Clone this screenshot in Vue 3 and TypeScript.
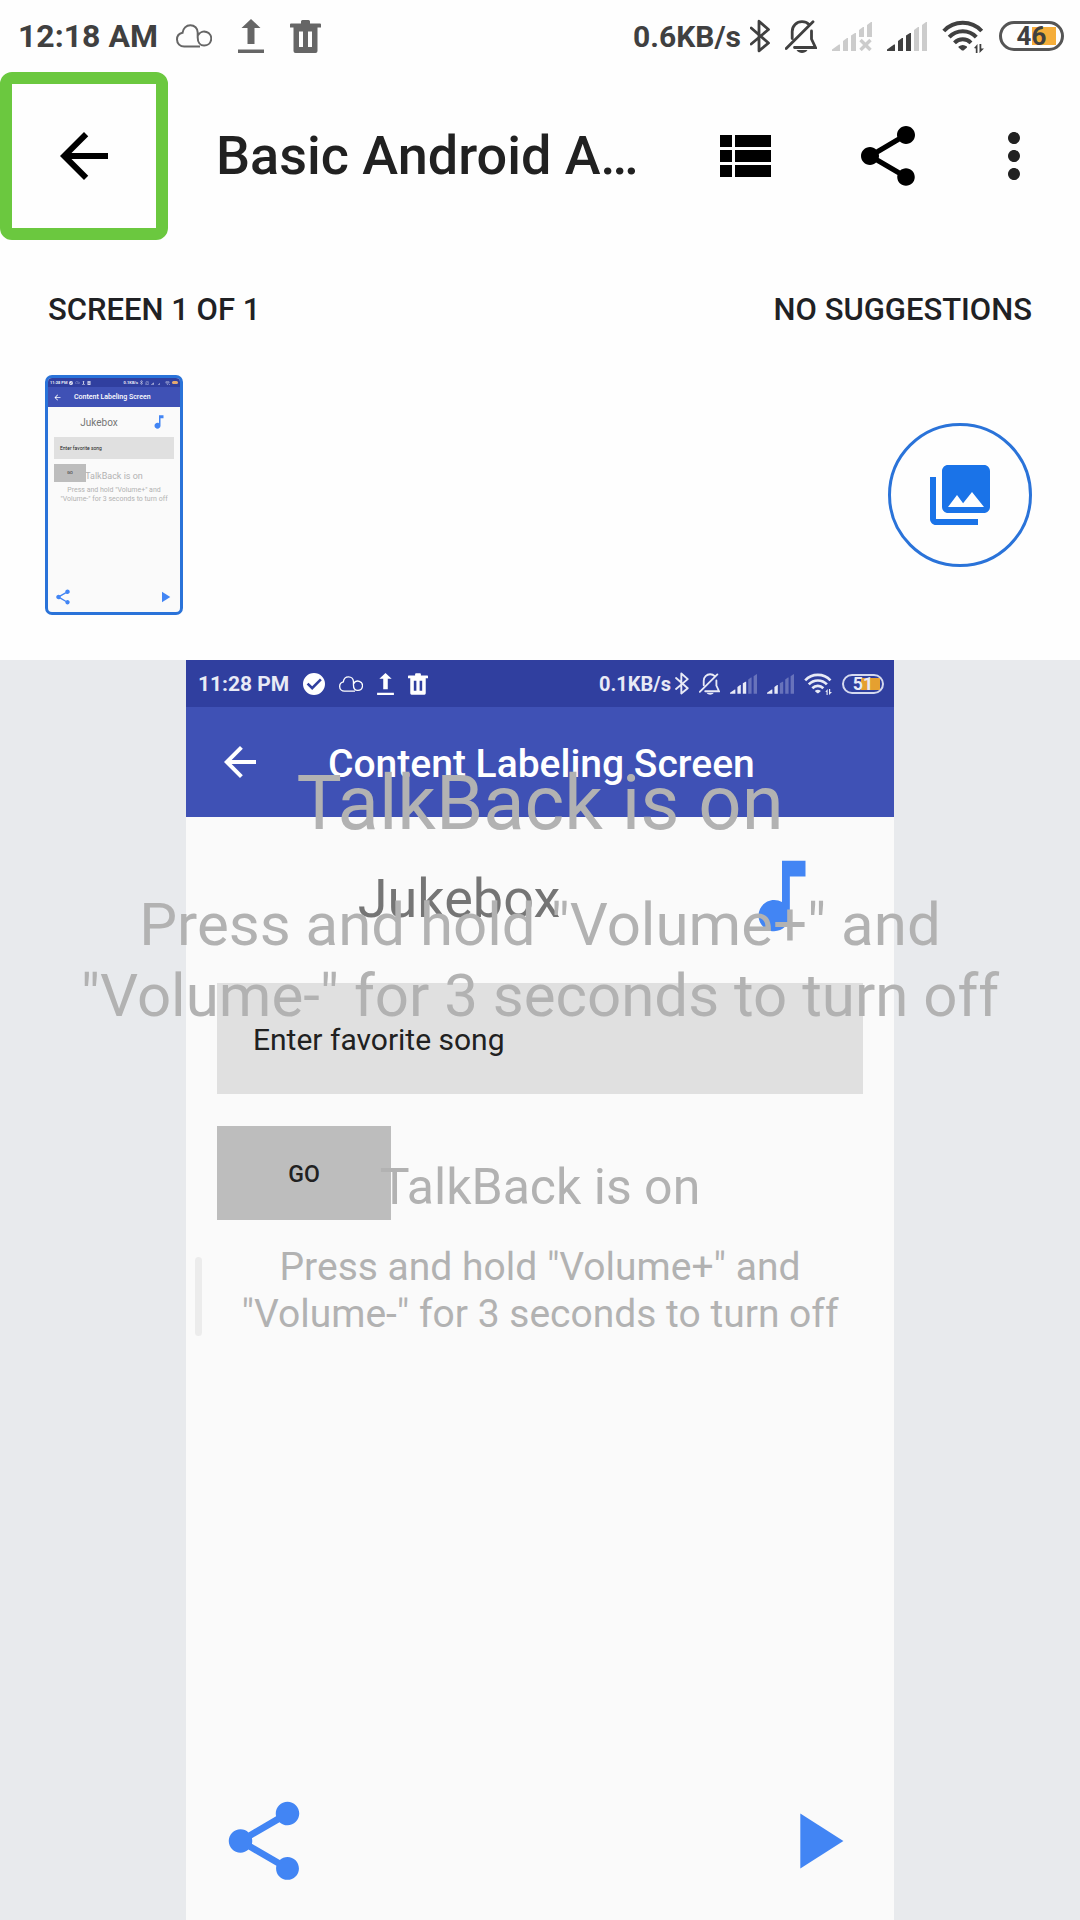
<script setup lang="ts">
import { ref } from 'vue'

interface Glyph {
  id: string
  w: number
  h: number
}

const title = 'Basic Android Apps'
const screenTitle = 'Content Labeling Screen'
const song = ref('')

const outerLeft: Glyph[] = [
  { id: 'cloud', w: 36, h: 24 },
  { id: 'upload', w: 26, h: 34 },
  { id: 'trash', w: 31, h: 33 },
]
</script>

<template>
  <svg class="sprite" aria-hidden="true">
    <symbol id="cloud" viewBox="0 0 36 24">
      <path
        d="M24 22.6H8.2C4.200 22.600 1 19.600 1 15.600 1 12 3.400 9.400 6.500 8.800 7 4.400 10.300 1.200 14.300 1.200 18.500 1.200 21.700 4.300 21.700 8.600V13.500C21.700 18 24 21.600 28 21.600a7 7 0 1 0-6-10.200"
        fill="none" stroke="currentColor" stroke-width="2" />
    </symbol>
    <symbol id="upload" viewBox="0 0 26 34">
      <path d="M13 0 22.500 9H16.500V25H9.500V9H3.500zM0 30.500h26V34H0z" fill="currentColor" />
    </symbol>
    <symbol id="trash" viewBox="0 0 31 33">
      <path fill-rule="evenodd"
        d="M11 1.500Q11 0 12.500 0H18.500Q20 0 20 1.500V3.500H30Q31 3.500 31 4.500V7.500H27.500V31Q27.500 33 25.500 33H5.500Q3.500 33 3.500 31V7.500H0V4.500Q0 3.500 1 3.500H11zM9 11.500v15.500h4V11.500zM18 11.500v15.500h4V11.500z"
        fill="currentColor" />
    </symbol>
    <symbol id="check" viewBox="0 0 24 24">
      <path fill-rule="evenodd" d="M12 0a12 12 0 1 0 0 24 12 12 0 0 0 0-24zM4 12.500 6 10.500 10 14.500 18.500 6 20.500 8 10 18.500z"
        fill="currentColor" />
    </symbol>
    <symbol id="bluetooth" viewBox="0 0 20 34">
      <path d="M1.200 9 18.500 24 9 31.800V2.200L18.500 10.500 1.200 25" fill="none" stroke="currentColor" stroke-width="2.800"
        stroke-linejoin="round" stroke-linecap="round" />
    </symbol>
    <symbol id="bell" viewBox="0 0 32 33">
      <path d="M7.200 18.500V11.500C7.200 6 11.600 1.700 17 1.700c2.800 0 5.200 1 7 2.700M26.500 11v8L30.500 27.500H9.500M28 1.800 1.200 28.500"
        fill="none" stroke="currentColor" stroke-width="2.800" stroke-linecap="round" />
      <path d="M11.500 30H22.500C21 32.300 19 33 17 33S13 32.300 11.500 30z" fill="currentColor" />
    </symbol>
    <symbol id="bar1" viewBox="0 0 40 29">
      <path d="M0 29V27.500L7 22.500H8V29z" fill="currentColor" />
    </symbol>
    <symbol id="bar2" viewBox="0 0 40 29">
      <path d="M11 29V19L15 16H16V29z" fill="currentColor" />
    </symbol>
    <symbol id="bar3" viewBox="0 0 40 29">
      <path d="M19 29V13.500L23 11H24V29z" fill="currentColor" />
    </symbol>
    <symbol id="bar4" viewBox="0 0 40 29">
      <path d="M27 29V8L31 5H32V29z" fill="currentColor" />
    </symbol>
    <symbol id="bar5" viewBox="0 0 40 29">
      <path d="M35 29V3L39 0H40V29z" fill="currentColor" />
    </symbol>
    <symbol id="nosignal" viewBox="0 0 40 29">
      <path
        d="M0 29V27.500L7 22.500H8V29zM11 29V19L15 16H16V29zM19 29V13.500L23 11H24V29zM27 15V8L31 5H32V15zM35 15V3L39 0H40V15z"
        fill="currentColor" />
      <path d="M28.500 18 38.500 28M38.500 18 28.500 28" stroke="currentColor" stroke-width="3.400" />
    </symbol>
    <symbol id="wifi" viewBox="0 0 42 33">
      <path d="M1.800 11A26 26 0 0 1 39.700 11M7.200 17.200A18.500 18.500 0 0 1 34.300 17.200M12.500 22.800A11.500 11.500 0 0 1 29 22.800"
        fill="none" stroke="currentColor" stroke-width="4" />
      <path d="M16.500 26.500Q20.700 23.500 25 26.500V27.500L21.500 30.500H20L16.500 27.500zM32 28 35.500 24V33H33.800V28.500zM37.500 24H39.300V28.500H42L37.500 33z"
        fill="currentColor" />
    </symbol>
    <symbol id="arrow" viewBox="0 0 24 24">
      <path d="M20 11H7.830l5.590-5.590L12 4l-8 8 8 8 1.410-1.410L7.830 13H20v-2z" fill="currentColor" />
    </symbol>
    <symbol id="share" viewBox="0 0 24 24">
      <path
        d="M18 16.080c-.76 0-1.440.3-1.960.77L8.910 12.700c.05-.23.09-.46.09-.7s-.04-.47-.09-.7l7.050-4.110c.54.5 1.250.81 2.040.81 1.660 0 3-1.340 3-3s-1.340-3-3-3-3 1.340-3 3c0 .24.04.47.09.7L8.040 9.810C7.500 9.310 6.790 9 6 9c-1.660 0-3 1.340-3 3s1.340 3 3 3c.79 0 1.500-.31 2.040-.81l7.120 4.160c-.05.21-.08.43-.08.65 0 1.610 1.310 2.920 2.920 2.920s2.920-1.310 2.920-2.920-1.310-2.920-2.920-2.920z"
        fill="currentColor" />
    </symbol>
    <symbol id="list" viewBox="0 0 24 24">
      <path d="M4 14h4v-4H4v4zm0 5h4v-4H4v4zM4 9h4V5H4v4zm5 5h12v-4H9v4zm0 5h12v-4H9v4zM9 5v4h12V5H9z"
        fill="currentColor" />
    </symbol>
    <symbol id="more" viewBox="0 0 24 24">
      <path
        d="M12 8c1.100 0 2-.9 2-2s-.9-2-2-2-2 .9-2 2 .9 2 2 2zm0 2c-1.100 0-2 .9-2 2s.9 2 2 2 2-.9 2-2-.9-2-2-2zm0 6c-1.100 0-2 .9-2 2s.9 2 2 2 2-.9 2-2-.9-2-2-2z"
        fill="currentColor" />
    </symbol>
    <symbol id="gallery" viewBox="0 0 24 24">
      <path
        d="M22 16V4c0-1.100-.9-2-2-2H8c-1.100 0-2 .9-2 2v12c0 1.100.9 2 2 2h12c1.100 0 2-.9 2-2zm-11-4l2.030 2.710L16 11l4 5H8l3-4zM2 6v14c0 1.100.9 2 2 2h14v-2H4V6H2z"
        fill="currentColor" />
    </symbol>
    <symbol id="note" viewBox="0 0 24 24">
      <path d="M12 3v10.550c-.59-.34-1.270-.55-2-.55-2.210 0-4 1.790-4 4s1.790 4 4 4 4-1.790 4-4V7h4V3h-6z"
        fill="currentColor" />
    </symbol>
    <symbol id="play" viewBox="0 0 24 24">
      <path d="M8 5v14l11-7z" fill="currentColor" />
    </symbol>
  </svg>

  <div class="page">
    <header class="status">
      <div class="status-left">
        <span class="clock">12:18 AM</span>
        <svg v-for="g in outerLeft" :key="g.id" :width="g.w" :height="g.h"><use :href="'#' + g.id" /></svg>
      </div>
      <div class="status-right">
        <span class="speed">0.6KB/s</span>
        <svg class="bt" width="20" height="34"><use href="#bluetooth" /></svg>
        <svg class="bell" width="32" height="33"><use href="#bell" /></svg>
        <svg class="faint" width="40" height="29"><use href="#nosignal" /></svg>
        <svg width="40" height="29">
          <use v-for="n in 5" :key="n" :href="'#bar' + n" :class="{ faint: n > 3 }" />
        </svg>
        <svg width="42" height="33"><use href="#wifi" /></svg>
        <span class="battery"><span>46</span></span>
      </div>
    </header>

    <div class="toolbar">
      <button class="back" aria-label="Navigate up"><svg width="72" height="72"><use href="#arrow" /></svg></button>
      <h1>{{ title }}</h1>
      <button class="tool" aria-label="View list"><svg width="72" height="72"><use href="#list" /></svg></button>
      <button class="tool" aria-label="Share"><svg width="72" height="72"><use href="#share" /></svg></button>
      <button class="tool more" aria-label="More options"><svg width="72" height="72"><use href="#more" /></svg></button>
    </div>

    <div class="summary">
      <span>SCREEN 1 OF 1</span>
      <span>NO SUGGESTIONS</span>
    </div>

    <div class="strip">
      <button class="thumb" aria-label="Screen 1">
        <span class="t-status">
          <span>11:28 PM</span>
          <svg width="4" height="4"><use href="#check" /></svg>
          <svg width="5" height="3"><use href="#cloud" /></svg>
          <svg width="3" height="4"><use href="#upload" /></svg>
          <svg width="4" height="4"><use href="#trash" /></svg>
          <span class="t-speed">0.1KB/s</span>
          <svg width="3" height="5"><use href="#bluetooth" /></svg>
          <svg width="4" height="4"><use href="#bell" /></svg>
          <svg width="5" height="4"><use href="#bar1" /><use href="#bar2" /><use href="#bar3" /></svg>
          <svg width="5" height="4"><use href="#bar1" /><use href="#bar2" /></svg>
          <svg width="5" height="4"><use href="#wifi" /></svg>
          <span class="t-battery"></span>
        </span>
        <span class="t-bar">
          <svg width="9" height="9"><use href="#arrow" /></svg>
          <span>{{ screenTitle }}</span>
        </span>
        <span class="t-head">
          <span>Jukebox</span>
          <svg width="18" height="18"><use href="#note" /></svg>
        </span>
        <span class="t-field">Enter favorite song</span>
        <span class="t-go">GO</span>
        <span class="t-foot">
          <svg width="18" height="18"><use href="#share" /></svg>
          <svg width="18" height="18"><use href="#play" /></svg>
        </span>
        <span class="t-toast">
          <span class="t-toast-title">TalkBack is on</span>
          <span>Press and hold "Volume+" and<br />"Volume-" for 3 seconds to turn off</span>
        </span>
      </button>
      <button class="gallery" aria-label="Show screenshots">
        <svg width="72" height="72"><use href="#gallery" /></svg>
      </button>
    </div>

    <main class="preview">
      <section class="phone">
        <div class="p-status">
          <div class="p-left">
            <span class="p-clock">11:28 PM</span>
            <svg width="22" height="22"><use href="#check" /></svg>
            <svg width="24" height="16"><use href="#cloud" /></svg>
            <svg width="17" height="22"><use href="#upload" /></svg>
            <svg width="20" height="22"><use href="#trash" /></svg>
          </div>
          <div class="p-right">
            <span class="p-speed">0.1KB/s</span>
            <svg class="p-bt" width="14" height="23"><use href="#bluetooth" /></svg>
            <svg width="21" height="22"><use href="#bell" /></svg>
            <svg width="27" height="20">
              <use v-for="n in 5" :key="n" :href="'#bar' + n" :class="{ dim: n > 3 }" />
            </svg>
            <svg width="27" height="20">
              <use v-for="n in 5" :key="n" :href="'#bar' + n" :class="{ dim: n > 2 }" />
            </svg>
            <svg width="28" height="22"><use href="#wifi" /></svg>
            <span class="p-battery"><span>51</span></span>
          </div>
        </div>
        <div class="p-bar">
          <button class="plain" aria-label="Back"><svg width="48" height="48"><use href="#arrow" /></svg></button>
          <h2>{{ screenTitle }}</h2>
        </div>
        <div class="p-body">
          <div class="p-head">
            <span>Jukebox</span>
            <svg width="94" height="94"><use href="#note" /></svg>
          </div>
          <input v-model="song" type="text" placeholder="Enter favorite song" aria-label="Enter favorite song" />
          <button class="go">GO</button>
          <div class="p-foot">
            <button class="plain" aria-label="Share song"><svg width="94" height="94"><use href="#share" /></svg></button>
            <button class="plain" aria-label="Play"><svg width="94" height="94"><use href="#play" /></svg></button>
          </div>
        </div>
        <span class="scrollbar"></span>
        <div class="toast small">
          <p class="toast-title">TalkBack is on</p>
          <p>Press and hold "Volume+" and<br />"Volume-" for 3 seconds to turn off</p>
        </div>
      </section>
      <div class="toast">
        <p class="toast-title">TalkBack is on</p>
        <p>Press and hold "Volume+" and<br />"Volume-" for 3 seconds to turn off</p>
      </div>
    </main>
  </div>
</template>

<style>
body {
  background: #fefefe;
}
</style>

<style scoped>
.sprite {
  position: absolute;
  width: 0;
  height: 0;
}

.page {
  display: flex;
  flex-direction: column;
  min-height: 100vh;
  background: #fefefe;
  color: #202124;
  font-family: Roboto, sans-serif;
}

svg {
  display: block;
  flex: none;
}

button {
  margin: 0;
  padding: 0;
  border: 0;
  background: none;
  color: inherit;
  font-family: inherit;
}

h1,
h2,
p {
  margin: 0;
}

/* Device status bar */
.status {
  display: flex;
  justify-content: space-between;
  height: 72px;
  padding: 0 16px 0 18px;
  box-sizing: border-box;
  color: #404040;
}

.status-left,
.status-right {
  display: flex;
  align-items: center;
}

.status-left {
  color: #666;
}

.status-left svg {
  margin-right: 26px;
}

.status-right {
  gap: 15px;
}

.clock {
  margin-right: 18px;
  color: #404040;
  font-size: 32px;
  font-weight: 700;
}

.speed {
  font-size: 30px;
  font-weight: 700;
}

.bt {
  margin-left: -6px;
}

.faint {
  color: #ccc;
}

.battery,
.p-battery {
  display: flex;
  align-items: center;
  justify-content: center;
  box-sizing: border-box;
  font-weight: 700;
}

.battery {
  width: 65px;
  height: 30px;
  border: 3px solid #555;
  border-radius: 15px;
  background: linear-gradient(#f5ae3a, #f5ae3a) 30px 3px / 24px 18px no-repeat;
  font-size: 26px;
}

/* App toolbar */
.toolbar {
  display: flex;
  align-items: center;
  padding-right: 12px;
}

.back {
  display: flex;
  align-items: center;
  justify-content: center;
  flex: none;
  box-sizing: border-box;
  width: 168px;
  height: 168px;
  border: 12px solid #6bc83f;
  border-radius: 12px;
  color: #000;
}

h1 {
  flex: 1;
  min-width: 0;
  margin: 0 12px 0 48px;
  overflow: hidden;
  color: #212121;
  font-size: 54px;
  font-weight: 500;
  line-height: 64px;
  text-overflow: ellipsis;
  white-space: nowrap;
}

.tool {
  display: flex;
  justify-content: center;
  width: 144px;
  color: #000;
}

.more {
  width: 108px;
  color: #212121;
}

.summary {
  display: flex;
  justify-content: space-between;
  padding: 51px 48px 0;
  font-size: 31px;
  font-weight: 500;
  line-height: 38px;
}

.strip {
  display: flex;
  align-items: center;
  justify-content: space-between;
  padding: 46px 48px 45px 45px;
}

.gallery {
  display: flex;
  align-items: center;
  justify-content: center;
  box-sizing: border-box;
  width: 144px;
  height: 144px;
  border: 3px solid #2a73d9;
  border-radius: 50%;
  color: #1a73e8;
}

/* Screen thumbnail */
.thumb {
  position: relative;
  display: flex;
  flex-direction: column;
  box-sizing: border-box;
  width: 138px;
  height: 240px;
  overflow: hidden;
  border: 3px solid #2a73d9;
  border-radius: 7px;
  background: #fafafa;
  text-align: left;
}

.t-status {
  display: flex;
  align-items: center;
  gap: 2px;
  height: 9px;
  padding: 0 2px;
  background: #303f9f;
  color: #e8eaf6;
  font-size: 4px;
  font-weight: 700;
}

.t-speed {
  margin-left: auto;
}

.t-battery {
  width: 6px;
  height: 3px;
  border-radius: 2px;
  background: #e5a970;
}

.t-bar {
  display: flex;
  align-items: center;
  gap: 12px;
  height: 20px;
  padding-left: 5px;
  background: #3f51b5;
  color: #fff;
  font-size: 7px;
  font-weight: 500;
}

.t-head {
  display: flex;
  align-items: center;
  gap: 6px;
  margin: 6px 12px 6px 6px;
  color: #757575;
  font-size: 10px;
}

.t-head span {
  flex: 1;
  text-align: center;
}

.t-head svg,
.t-foot {
  color: #4285f4;
}

.t-field {
  margin: 0 6px;
  padding-left: 6px;
  background: #e0e0e0;
  color: #212121;
  font-size: 5px;
  line-height: 22px;
}

.t-go {
  width: 32px;
  margin: 5px 6px;
  background: #bdbdbd;
  color: #212121;
  font-size: 4px;
  line-height: 18px;
  text-align: center;
}

.t-foot {
  display: flex;
  justify-content: space-between;
  margin: auto 6px 6px;
}

.t-toast {
  position: absolute;
  top: 93px;
  right: 0;
  left: 0;
  color: #b2b2b2;
  font-size: 7px;
  line-height: 9px;
  text-align: center;
  white-space: nowrap;
}

.t-toast-title {
  display: block;
  margin-bottom: 4px;
  font-size: 9px;
  line-height: 11px;
}

/* Full screen preview */
.preview {
  position: relative;
  display: flex;
  flex: 1;
  flex-direction: column;
  padding: 0 186px;
  background: #e8eaed;
}

.phone {
  position: relative;
  display: flex;
  flex: 1;
  flex-direction: column;
  background: #fafafa;
}

.p-status {
  display: flex;
  justify-content: space-between;
  height: 47px;
  padding: 0 10px 0 12px;
  background: #303f9f;
  color: #fff;
}

.p-left,
.p-right {
  display: flex;
  align-items: center;
}

.p-left {
  gap: 14px;
}

.p-right {
  gap: 10px;
  color: #e8eaf6;
}

.p-clock {
  color: #e8eaf6;
  font-size: 21px;
  font-weight: 700;
}

.p-speed {
  font-size: 20px;
  font-weight: 700;
}

.p-bt {
  margin-left: -6px;
}

.dim {
  color: #6873bb;
}

.p-battery {
  width: 42px;
  height: 20px;
  border: 2px solid #d5d9ef;
  border-radius: 10px;
  background: linear-gradient(#e5a030, #e5a030) 17px 2px / 19px 12px no-repeat;
  font-size: 18px;
}

.p-bar {
  display: flex;
  align-items: center;
  gap: 64px;
  height: 110px;
  padding-left: 30px;
  background: #3f51b5;
  color: #fff;
}

h2 {
  padding-top: 4px;
  font-size: 39px;
  font-weight: 500;
  line-height: 46px;
  white-space: nowrap;
}

.p-body {
  display: flex;
  flex: 1;
  flex-direction: column;
  padding: 32px 31px;
}

.p-head {
  display: flex;
  align-items: center;
  gap: 34px;
  margin-bottom: 40px;
  padding-right: 34px;
  color: #757575;
  font-size: 54px;
}

.p-head span {
  flex: 1;
  padding-top: 4px;
  text-align: center;
}

.p-head svg,
.p-foot {
  color: #4285f4;
}

input {
  box-sizing: border-box;
  width: 100%;
  height: 111px;
  margin: 0 0 32px;
  padding: 2px 36px 0;
  border: 0;
  border-radius: 0;
  background: #e0e0e0;
  color: #212121;
  font-family: inherit;
  font-size: 30px;
}

input::placeholder {
  color: #212121;
  opacity: 1;
}

.go {
  width: 174px;
  height: 94px;
  padding-top: 2px;
  background: #bdbdbd;
  color: #212121;
  font-size: 23px;
  font-weight: 500;
}

.p-foot {
  display: flex;
  justify-content: space-between;
  margin-top: auto;
}

.scrollbar {
  position: absolute;
  top: 597px;
  left: 9px;
  width: 7px;
  height: 79px;
  border-radius: 4px;
  background: #ececec;
}

/* Accessibility notice drawn over the screen */
.toast {
  position: absolute;
  top: 99px;
  right: 0;
  left: 0;
  color: #b2b2b2;
  font-size: 60px;
  line-height: 71px;
  text-align: center;
  white-space: nowrap;
  pointer-events: none;
}

.toast-title {
  margin-bottom: 41px;
  font-size: 76px;
  line-height: 89px;
}

.small {
  top: 498px;
  font-size: 39px;
  line-height: 47px;
}

.small .toast-title {
  margin-bottom: 27px;
  font-size: 50px;
  line-height: 59px;
}
</style>
